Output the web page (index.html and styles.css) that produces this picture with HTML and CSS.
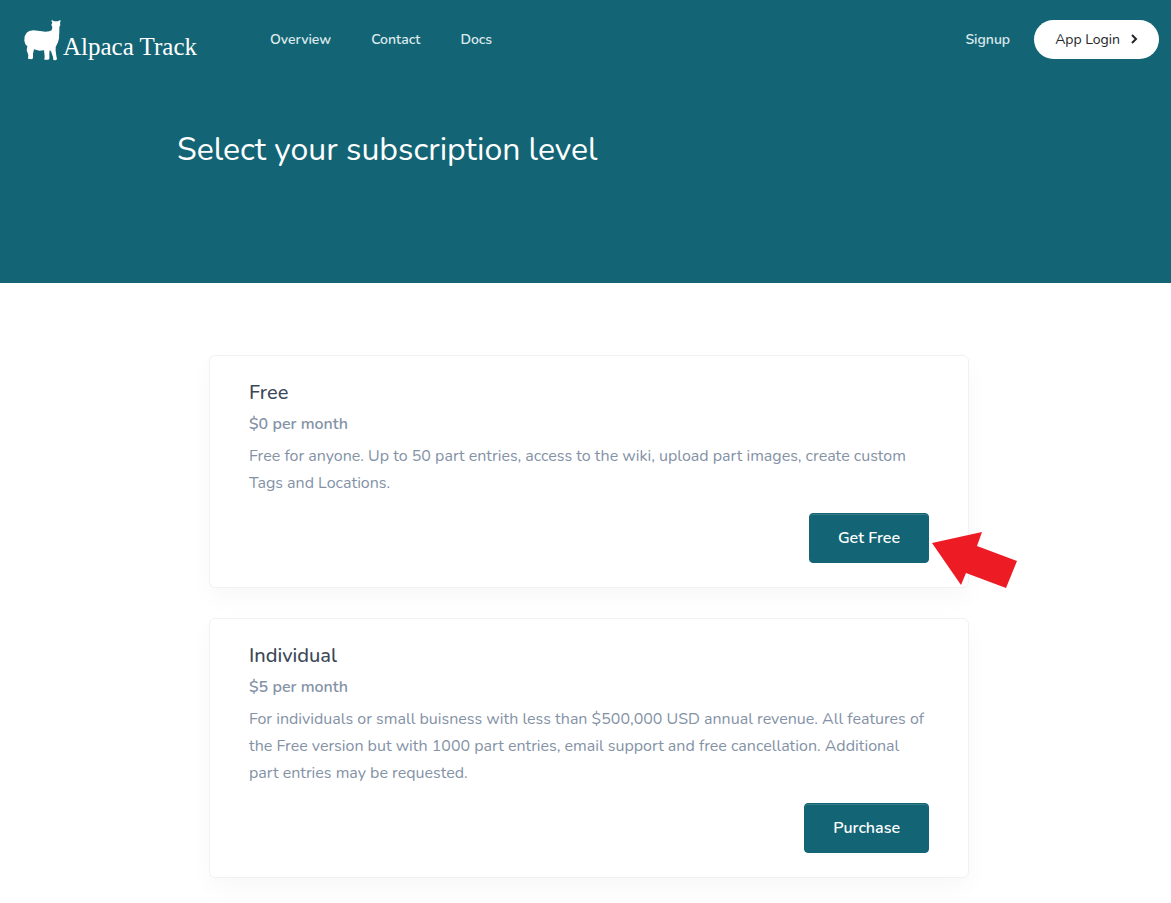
FILE: index.html
```html
<!DOCTYPE html>
<html lang="en">

<head>
	<meta charset="UTF-8">
	<meta name="viewport" content="width=device-width, initial-scale=1.0">
	<title>Alpaca Track - Subscription</title>
	<link rel="stylesheet" href="styles.css">
</head>

<body>
	<header class="hero">
		<nav class="navbar">
			<a class="brand" href="#">
				<svg class="brand-icon" viewBox="22 17 111 123" aria-hidden="true">
					<path d="M106 17 L112 21 L124 21 L130 17 L132 20 L130 26 L131 32 L128 38 L128 50 L127 72 L124 84 L120 92 L117 98 L117 109 L119 124 L121 135 L117 138 L110 137 L109 128 L103 111 L99 108 L98 117 L98 133 L95 136 L83 136 L84 126 L82 108 L68 109 L52 105 L49 118 L49 132 L45 135 L34 133 L35 122 L30 108 L32 96 L26 90 L23 79 L24 66 L30 55 L38 50 L50 48 L70 50 L86 52 L98 51 L105 48 L107 39 L104 31 L107 25 L104 20 Z" />
				</svg>
				<span class="brand-name">Alpaca Track</span>
			</a>
			<ul class="nav-links">
				<li><a href="#">Overview</a></li>
				<li><a href="#">Contact</a></li>
				<li><a href="#">Docs</a></li>
			</ul>
			<a class="signup" href="#">Signup</a>
			<a class="login" href="#">
				App Login
				<svg class="chevron" viewBox="0 0 8 10" aria-hidden="true">
					<path d="M2 1 L6 5 L2 9" />
				</svg>
			</a>
		</nav>
		<h1 class="hero-title">Select your subscription level</h1>
	</header>

	<main class="plans">
		<section class="card">
			<h2 class="card-title">Free</h2>
			<p class="card-price">$0 per month</p>
			<p class="card-text">Free for anyone. Up to 50 part entries, access to the wiki, upload part images, create custom Tags and Locations.</p>
			<div class="card-action">
				<button class="btn" type="button">Get Free</button>
				<svg class="pointer" viewBox="0 0 86 56" aria-hidden="true">
					<path d="M0 11 L50 0 L45 14 L85 29 L74 56 L34 41 L29 53 Z" />
				</svg>
			</div>
		</section>

		<section class="card">
			<h2 class="card-title">Individual</h2>
			<p class="card-price">$5 per month</p>
			<p class="card-text">For individuals or small buisness with less than $500,000 USD annual revenue. All features of the Free version but with 1000 part entries, email support and free cancellation. Additional part entries may be requested.</p>
			<div class="card-action">
				<button class="btn" type="button">Purchase</button>
			</div>
		</section>
	</main>
</body>

</html>
```
FILE: styles.css
```css
*,
*::before,
*::after {
	box-sizing: border-box;
}

body {
	margin: 0;
	background: #fff;
	color: #8492a6;
	font-family: Nunito, "Open Sans", sans-serif;
	font-size: 16px;
	line-height: 27px;
}

h1,
h2,
p,
ul {
	margin: 0;
	padding: 0;
	font-weight: 400;
}

a {
	color: inherit;
	text-decoration: none;
}

/* Header */
.hero {
	padding: 19px 12px 113px 19px;
	background: #136575;
	color: #fff;
}

.navbar {
	display: flex;
	align-items: center;
	height: 40px;
	font-size: 14px;
	font-weight: 600;
}

.brand {
	display: flex;
	align-items: flex-end;
	gap: 2px;
	margin: 2px 73px 0 5px;
}

.brand-icon {
	width: 37px;
	height: 41px;
	fill: #fff;
}

.brand-name {
	font-family: "Liberation Serif", serif;
	font-size: 25px;
	font-weight: 400;
	line-height: 28px;
}

.nav-links {
	display: flex;
	gap: 40px;
	list-style: none;
}

.nav-links,
.signup {
	color: #dfeaed;
	font-weight: 600;
}

.signup {
	margin-left: auto;
	margin-right: 24px;
}

.login {
	display: flex;
	align-items: center;
	gap: 10px;
	padding: 6px 21px;
	border-radius: 20px;
	background: #fff;
	color: #212529;
	font-weight: 400;
}

.chevron {
	width: 8px;
	height: 10px;
	fill: none;
	stroke: #212529;
	stroke-width: 2;
}

.hero-title {
	max-width: 824px;
	margin: 70px auto 0;
	font-size: 32px;
	line-height: 41px;
}

/* Plans */
.plans {
	display: flex;
	flex-direction: column;
	align-items: center;
	gap: 30px;
	padding: 72px 12px 25px 19px;
}

.card {
	width: 100%;
	max-width: 760px;
	padding: 24px 39px;
	border: 1px solid #f0f1f5;
	border-radius: 6px;
	background: #fff;
	box-shadow: 0 10px 25px rgba(0, 0, 0, 0.03);
}

.card-title {
	margin-bottom: 6px;
	color: #3c4858;
	font-size: 20px;
	font-weight: 500;
	line-height: 26px;
}

.card-price {
	margin-bottom: 7px;
	font-weight: 600;
	line-height: 24px;
}

.card-text {
	margin-bottom: 16px;
}

.card-action {
	position: relative;
	display: flex;
	justify-content: flex-end;
}

.btn {
	height: 50px;
	padding: 0 28px;
	border: 1px solid #136575;
	border-radius: 4px;
	background: #136575;
	box-shadow: inset 0 1px 0 rgba(255, 255, 255, 0.15);
	color: #fff;
	font-family: inherit;
	font-size: 16px;
	font-weight: 600;
	cursor: pointer;
}

/* Arrow next to the free plan, hangs over the card edge */
.pointer {
	position: absolute;
	top: 19px;
	left: calc(100% + 3px);
	width: 86px;
	height: 56px;
	fill: #ed1c24;
}
```
